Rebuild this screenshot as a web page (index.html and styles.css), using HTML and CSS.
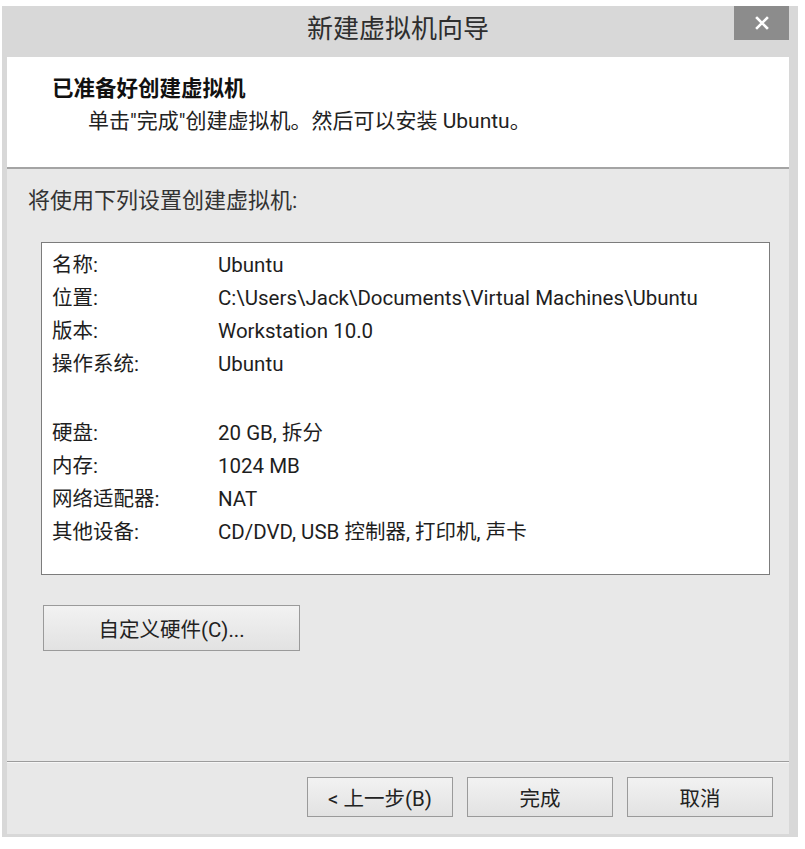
FILE: index.html
```html
<!DOCTYPE html>
<html lang="zh-CN">
<head>
<meta charset="utf-8">
<title>新建虚拟机向导</title>
<link rel="stylesheet" href="styles.css">
</head>
<body>
<div class="window">
  <div class="titlebar">
    <div class="title">新建虚拟机向导</div>
    <div class="close">
      <svg width="16" height="16" viewBox="0 0 16 16"><path d="M3 3 L13 13 M13 3 L3 13" stroke="#fff" stroke-width="2.6" stroke-linecap="square"/></svg>
    </div>
  </div>
  <div class="client">
    <div class="header">
      <div class="h-title">已准备好创建虚拟机</div>
      <div class="h-sub">单击"完成"创建虚拟机。然后可以安装 Ubuntu。</div>
    </div>
    <div class="content">
      <div class="intro">将使用下列设置创建虚拟机:</div>
      <div class="summary">
        <div class="row"><span class="k">名称:</span><span class="v">Ubuntu</span></div>
        <div class="row"><span class="k">位置:</span><span class="v">C:\Users\Jack\Documents\Virtual Machines\Ubuntu</span></div>
        <div class="row"><span class="k">版本:</span><span class="v">Workstation 10.0</span></div>
        <div class="row"><span class="k">操作系统:</span><span class="v">Ubuntu</span></div>
        <div class="spacer"></div>
        <div class="row"><span class="k">硬盘:</span><span class="v">20 GB, 拆分</span></div>
        <div class="row"><span class="k">内存:</span><span class="v">1024 MB</span></div>
        <div class="row"><span class="k">网络适配器:</span><span class="v">NAT</span></div>
        <div class="row"><span class="k">其他设备:</span><span class="v">CD/DVD, USB 控制器, 打印机, 声卡</span></div>
      </div>
      <button class="btn btn-custom">自定义硬件(C)...</button>
    </div>
    <div class="footer">
      <button class="btn btn-nav">&lt; 上一步(B)</button>
      <button class="btn btn-nav">完成</button>
      <button class="btn btn-nav">取消</button>
    </div>
  </div>
</div>
</body>
</html>
```
FILE: styles.css
```css
* { box-sizing: border-box; }
html, body { margin: 0; padding: 0; background: #ffffff; }
body {
  font-family: Roboto, "Noto Sans CJK SC", sans-serif;
  color: #1e1e1e;
}
.window {
  margin: 6px 0 0 2px;
  width: 796px;
  background: #d8d8d8;
  padding: 0 9px 3px 5px;
}
.titlebar {
  position: relative;
  height: 51px;
  display: flex;
  justify-content: center;
  align-items: flex-start;
}
.title {
  font-size: 26px;
  line-height: 46px;
  color: #2e2e2e;
}
.close {
  position: absolute;
  top: 0;
  right: 0;
  width: 55px;
  height: 34px;
  background: #8c8c8c;
  display: flex;
  align-items: center;
  justify-content: center;
}
.client {
  width: 782px;
  background: #e8e8e8;
}
.header {
  background: #ffffff;
  height: 112px;
  padding: 19px 0 0 45px;
  border-bottom: 2px solid #a4a4a4;
}
.h-title {
  font-size: 21.5px;
  font-weight: 700;
  line-height: 26px;
  color: #111;
}
.h-sub {
  font-size: 21px;
  line-height: 30px;
  margin-top: 4px;
  padding-left: 36px;
  color: #222;
}
.content {
  height: 592px;
  padding: 18px 20px 0 21px;
}
.intro {
  font-size: 22px;
  line-height: 28px;
  color: #333;
}
.summary {
  margin: 27px 0 0 13px;
  width: 729px;
  height: 333px;
  background: #ffffff;
  border: 1px solid #7c7c7c;
  padding: 6px 0 0 10px;
}
.row {
  display: flex;
  font-size: 20.5px;
  line-height: 33px;
  height: 33px;
}
.k { width: 166px; flex: none; }
.v { flex: 1; }
.spacer { height: 36px; }
.btn {
  font-family: Roboto, "Noto Sans CJK SC", sans-serif;
  font-size: 20.5px;
  color: #222;
  background: linear-gradient(#f2f2f2, #e2e2e2);
  border: 1px solid #9a9a9a;
  padding: 0;
  margin: 0;
}
.btn-custom {
  display: block;
  margin: 30px 0 0 15px;
  width: 257px;
  height: 46px;
}
.footer {
  border-top: 1px solid #9c9c9c;
  box-shadow: inset 0 1px 0 #f6f6f6;
  height: 73px;
  padding: 15px 16px 0 0;
  display: flex;
  justify-content: flex-end;
  gap: 14px;
}
.btn-nav {
  width: 146px;
  height: 40px;
}
```
